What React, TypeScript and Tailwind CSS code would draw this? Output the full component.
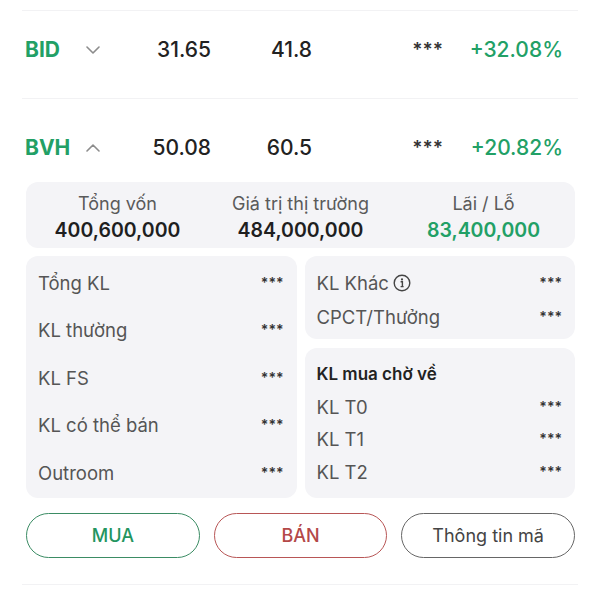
import React from 'react';

const GREEN = 'text-[#22a066]';

function Chevron({ up }: { up?: boolean }) {
  return (
    <svg width="14" height="8" viewBox="0 0 14 8" fill="none" className="shrink-0">
      <path
        d={up ? 'M1 7 L7 1 L13 7' : 'M1 1 L7 7 L13 1'}
        stroke="#8c8c8c"
        strokeWidth="1.6"
        strokeLinecap="round"
        strokeLinejoin="round"
      />
    </svg>
  );
}

function InfoIcon() {
  return (
    <svg width="18" height="18" viewBox="0 0 18 18" fill="none" className="ml-[4px]">
      <circle cx="9" cy="9" r="7.8" stroke="#444" strokeWidth="1.4" />
      <circle cx="9" cy="5.4" r="1.1" fill="#444" />
      <path d="M7.6 7.8 H9.4 V12.6 M7.6 12.6 H10.6" stroke="#444" strokeWidth="1.4" />
    </svg>
  );
}

type Stock = {
  code: string;
  open: boolean;
  cost: string;
  price: string;
  pct: string;
};

function StockRow({ s }: { s: Stock }) {
  return (
    <div className="flex items-center pl-[3px] pr-[15px] leading-[22px]">
      <span className={`w-[61px] text-[21px] font-bold ${GREEN}`}>{s.code}</span>
      <Chevron up={s.open} />
      <span className="w-[111px] text-right text-[21px] font-medium text-[#222]">{s.cost}</span>
      <span className="w-[101px] text-right text-[21px] font-medium text-[#222]">{s.price}</span>
      <span className="w-[131px] text-right text-[19px] font-semibold text-[#333]">***</span>
      <span className={`flex-1 text-right text-[21px] font-medium ${GREEN}`}>{s.pct}</span>
    </div>
  );
}

function Line({ label, icon }: { label: string; icon?: boolean }) {
  return (
    <div className="flex items-center justify-between leading-[22px]">
      <span className="flex items-center text-[18.5px] text-[#555]">
        {label}
        {icon && <InfoIcon />}
      </span>
      <span className="text-[14px] font-semibold text-[#333]">***</span>
    </div>
  );
}

export default function App() {
  const summary = [
    { label: 'Tổng vốn', value: '400,600,000', green: false },
    { label: 'Giá trị thị trường', value: '484,000,000', green: false },
    { label: 'Lãi / Lỗ', value: '83,400,000', green: true },
  ];

  return (
    <div className="min-h-[600px] bg-white px-[22px] pt-[10px] font-['Inter',sans-serif]">
      <div className="border-t border-[#f2f2f4]" />

      <div className="pt-[28px] pb-[37px]">
        <StockRow s={{ code: 'BID', open: false, cost: '31.65', price: '41.8', pct: '+32.08%' }} />
      </div>
      <div className="border-t border-[#f2f2f4]" />

      <div className="pt-[38px]">
        <StockRow s={{ code: 'BVH', open: true, cost: '50.08', price: '60.5', pct: '+20.82%' }} />
      </div>

      <div className="ml-[4px] mr-[3px] mt-[23px]">
        {/* summary */}
        <div className="grid grid-cols-3 rounded-[12px] bg-[#f4f4f7] pt-[11px] pb-[5px] text-center">
          {summary.map((it) => (
            <div key={it.label} className="flex flex-col items-center">
              <span className="text-[18px] leading-[22px] text-[#5a5a5a]">{it.label}</span>
              <span
                className={`mt-[2px] text-[19.5px] font-semibold leading-[26px] ${it.green ? GREEN : 'text-[#1f1f1f]'}`}
              >
                {it.value}
              </span>
            </div>
          ))}
        </div>

        {/* details */}
        <div className="mt-[8px] grid grid-cols-2 gap-[8px]">
          <div className="flex flex-col justify-between rounded-[12px] bg-[#f4f4f7] pt-[16px] pb-[14px] pl-[12px] pr-[13px]">
            <Line label="Tổng KL" />
            <Line label="KL thường" />
            <Line label="KL FS" />
            <Line label="KL có thể bán" />
            <Line label="Outroom" />
          </div>

          <div className="flex flex-col gap-[9px]">
            <div className="flex flex-col gap-[12px] rounded-[12px] bg-[#f4f4f7] pt-[16px] pb-[11px] pl-[12px] pr-[13px]">
              <Line label="KL Khác" icon />
              <Line label="CPCT/Thưởng" />
            </div>
            <div className="flex flex-1 flex-col gap-[10.5px] rounded-[12px] bg-[#f4f4f7] pt-[15px] pb-[15px] pl-[12px] pr-[13px]">
              <div className="text-[17px] font-semibold leading-[22px] text-[#222]">KL mua chờ về</div>
              <Line label="KL T0" />
              <Line label="KL T1" />
              <Line label="KL T2" />
            </div>
          </div>
        </div>

        {/* actions */}
        <div className="mt-[15px] grid grid-cols-3 gap-[14px]">
          <button className="h-[45px] rounded-full border-[1.5px] border-[#3b8c64] text-[18px] font-medium text-[#23955f]">
            MUA
          </button>
          <button className="h-[45px] rounded-full border-[1.5px] border-[#b85656] text-[18px] font-medium text-[#b44848]">
            BÁN
          </button>
          <button className="h-[45px] rounded-full border-[1.5px] border-[#666] text-[18px] text-[#444]">
            Thông tin mã
          </button>
        </div>
      </div>

      <div className="mt-[26px] border-t border-[#f2f2f4]" />
    </div>
  );
}
